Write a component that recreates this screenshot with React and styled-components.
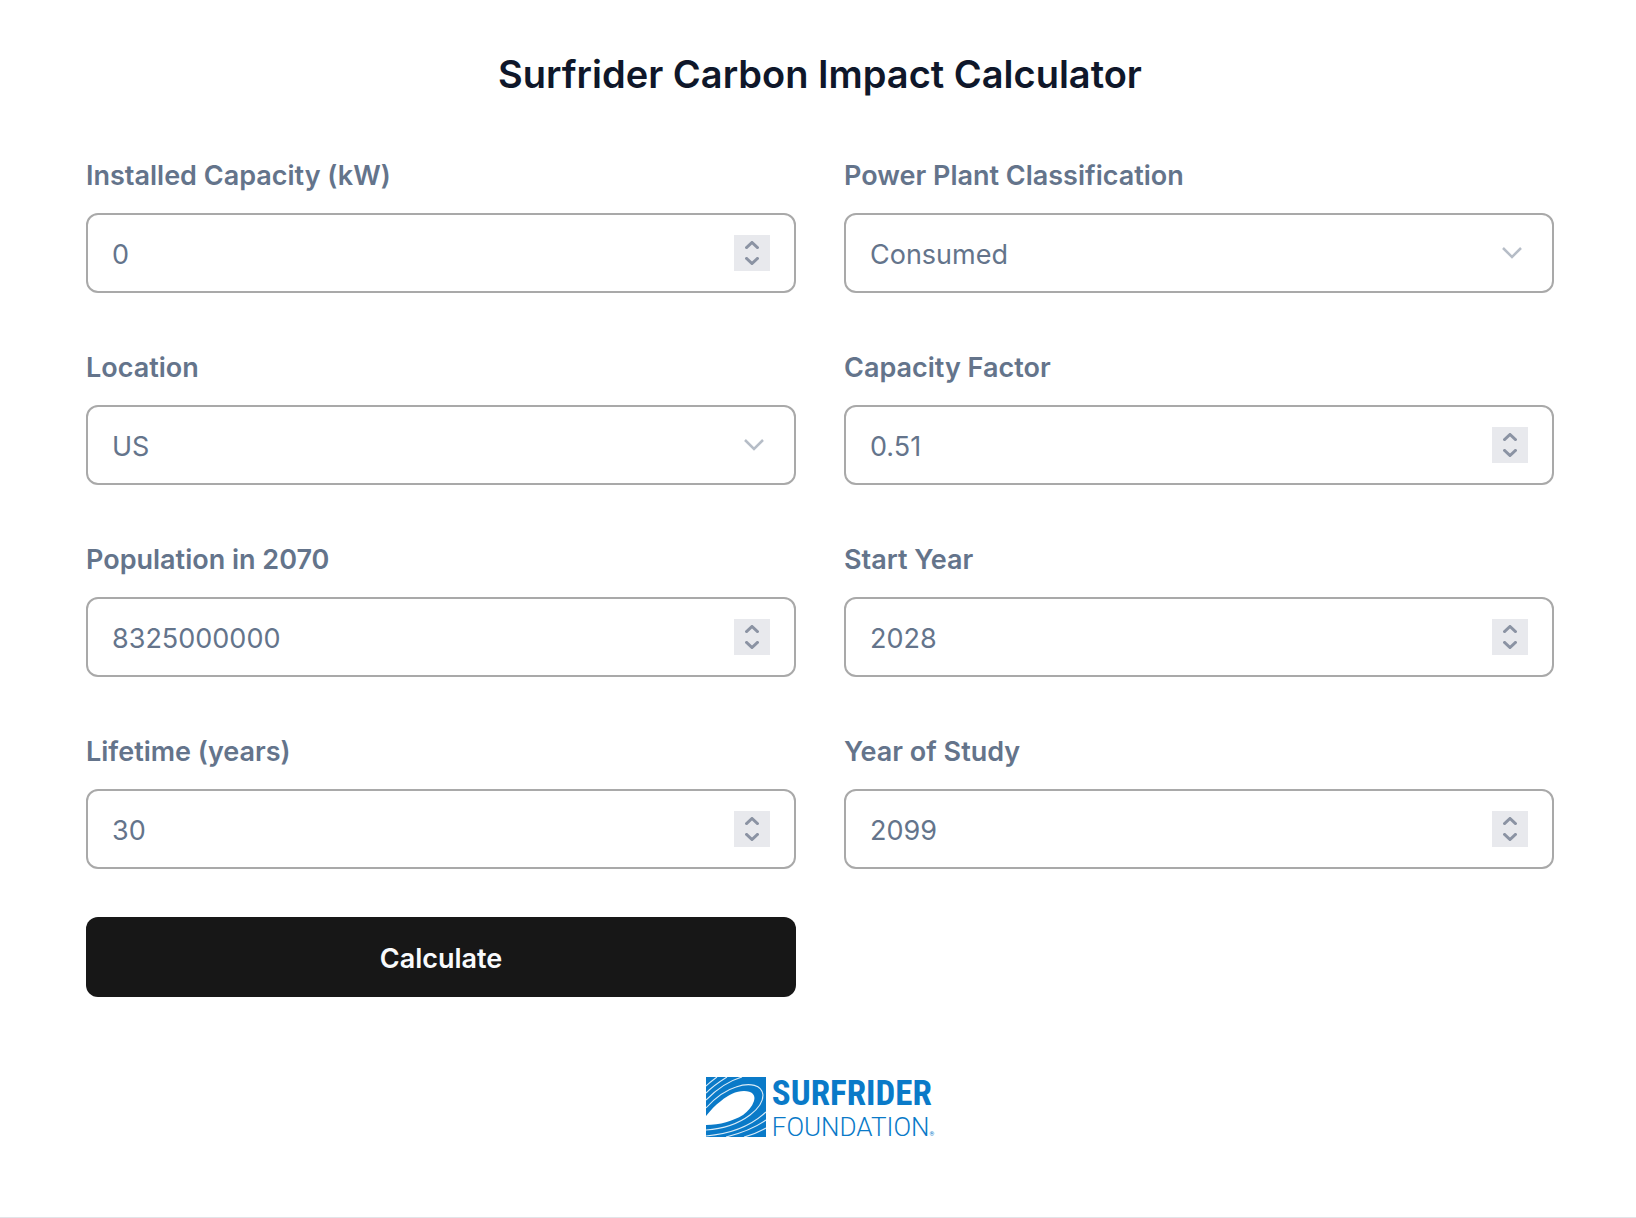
import React, { useState } from "react";
import styled, { createGlobalStyle } from "styled-components";

const GlobalStyle = createGlobalStyle`
  * { box-sizing: border-box; }
  body {
    margin: 0;
    background: #ffffff;
    color: #0f172a;
    font-family: Inter, "Liberation Sans", sans-serif;
  }
`;

const Page = styled.main`
  padding: 54px 82px 80px 86px;
  border-bottom: 1px solid #e2e4e8;
`;

const Title = styled.h1`
  margin: 0 0 55px;
  font-size: 38px;
  line-height: 40px;
  font-weight: 600;
  text-align: center;
`;

const Form = styled.form`
  display: grid;
  grid-template-columns: 1fr 1fr;
  gap: 48px;
`;

const Field = styled.div`
  display: flex;
  flex-direction: column;
  gap: 23px;
  padding-top: 13px;
`;

const Label = styled.label`
  align-self: flex-start;
  font-size: 27px;
  line-height: 28px;
  font-weight: 600;
  color: #64748b;
`;

const Control = styled.div`
  display: flex;
  align-items: center;
  height: 80px;
  padding-right: 24px;
  border: 2px solid #a9a9a9;
  border-radius: 12px;
  background: #ffffff;
`;

const NumberInput = styled.input`
  flex: 1;
  min-width: 0;
  height: 100%;
  padding: 2px 24px 0;
  border: 0;
  outline: none;
  background: transparent;
  color: #64748b;
  font: inherit;
  font-size: 27px;
  appearance: textfield;

  &::-webkit-inner-spin-button {
    display: none;
  }
`;

const Stepper = styled.div`
  display: flex;
  flex-direction: column;
  width: 36px;
  height: 36px;
  background: #e8e9ed;
`;

const StepButton = styled.button`
  display: flex;
  flex: 1;
  align-items: ${(p) => (p.$up ? "flex-end" : "flex-start")};
  justify-content: center;
  padding: ${(p) => (p.$up ? "0 0 4px" : "4px 0 0")};
  border: 0;
  background: none;
  color: #8b93a3;
`;

const SelectControl = styled(Control)`
  display: grid;
  padding-right: 0;

  & > * {
    grid-area: 1 / 1;
  }

  & > svg {
    justify-self: end;
    margin-right: 30px;
    color: #b6bdc7;
    pointer-events: none;
  }
`;

const Select = styled.select`
  width: 100%;
  height: 76px;
  padding: 2px 24px 0;
  border: 0;
  outline: none;
  appearance: none;
  background: transparent;
  color: #64748b;
  font: inherit;
  font-size: 27px;
`;

const SubmitButton = styled.button`
  height: 80px;
  padding: 2px 24px 0;
  border: 0;
  border-radius: 12px;
  background: #171717;
  color: #f8fafc;
  font: inherit;
  font-size: 27px;
  font-weight: 600;
`;

const Footer = styled.footer`
  display: flex;
  justify-content: center;
  padding-top: 80px;
`;

const Brand = styled.a`
  display: flex;
  gap: 6px;
  height: 60px;
  color: #0a7ac8;
  text-decoration: none;
`;

const BrandText = styled.span`
  display: flex;
  flex-direction: column;
  justify-content: space-between;
`;

const BrandName = styled.span`
  font-family: "Roboto Condensed", "Liberation Sans Narrow", "DejaVu Sans Condensed", sans-serif;
  font-size: 35px;
  line-height: 34px;
  font-weight: 700;
`;

const BrandSub = styled.span`
  font-family: Roboto, sans-serif;
  font-size: 26px;
  line-height: 18px;
  font-weight: 300;
`;

const Registered = styled.small`
  font-size: 6px;
  line-height: 6px;
  font-weight: 400;
`;

function StepIcon({ up }) {
  return (
    <svg width="14" height="8" viewBox="0 0 14 8" fill="none" stroke="currentColor" strokeWidth="3" aria-hidden="true">
      <path d={up ? "M0.5 7.5 7 1.5l6.5 6" : "M0.5 0.5 7 6.5l6.5-6"} />
    </svg>
  );
}

function NumberField({ id, label, initial, step = 1 }) {
  const [value, setValue] = useState(initial);
  const change = (amount) => setValue(String(Number((Number(value) + amount).toFixed(2))));
  return (
    <Field>
      <Label htmlFor={id}>{label}</Label>
      <Control>
        <NumberInput id={id} type="number" step={step} value={value} onChange={(e) => setValue(e.target.value)} />
        <Stepper>
          <StepButton type="button" $up aria-label={`Increase ${label}`} onClick={() => change(step)}>
            <StepIcon up />
          </StepButton>
          <StepButton type="button" aria-label={`Decrease ${label}`} onClick={() => change(-step)}>
            <StepIcon />
          </StepButton>
        </Stepper>
      </Control>
    </Field>
  );
}

function SelectField({ id, label, options }) {
  return (
    <Field>
      <Label htmlFor={id}>{label}</Label>
      <SelectControl>
        <Select id={id}>
          {options.map((option) => (
            <option key={option}>{option}</option>
          ))}
        </Select>
        <svg width="20" height="12" viewBox="0 0 20 12" fill="none" stroke="currentColor" strokeWidth="2.5" aria-hidden="true">
          <path d="M1 1l9 9 9-9" />
        </svg>
      </SelectControl>
    </Field>
  );
}

function WaveMark() {
  return (
    <svg width="60" height="60" viewBox="0 0 60 60" aria-hidden="true">
      <path fill="currentColor" d="M0 0h60v60H0z" />
      <path fill="#fff" d="M0 39C5 33 9 28 15 24C22 18 30 14 38 14C46 14 50 18 48 24C46 30 42 34 37 38C27 44 14 48 0 48z" />
      <g fill="none" stroke="#fff" strokeWidth="1.1" strokeOpacity="0.85">
        <path d="M0 9C3 6 7 3 11 0" />
        <path d="M0 16C6 10 13 5 21 0" />
        <path d="M0 23C10 13 22 4 36 0" />
        <path d="M0 31C9 21 20 13 30 10C44 5 56 8 57 18C57 25 52 32 44 38C32 47 16 52 0 53" />
        <path d="M0 59C24 57 45 49 60 35" />
        <path d="M20 60C36 56 49 51 60 43" />
        <path d="M38 60C46 58 53 55 60 51" />
      </g>
    </svg>
  );
}

export default function App() {
  return (
    <>
      <GlobalStyle />
      <Page>
        <Title>Surfrider Carbon Impact Calculator</Title>
        <Form onSubmit={(e) => e.preventDefault()}>
          <NumberField id="capacity" label="Installed Capacity (kW)" initial="0" />
          <SelectField id="classification" label="Power Plant Classification" options={["Consumed"]} />
          <SelectField id="location" label="Location" options={["US"]} />
          <NumberField id="factor" label="Capacity Factor" initial="0.51" step={0.01} />
          <NumberField id="population" label="Population in 2070" initial="8325000000" />
          <NumberField id="start" label="Start Year" initial="2028" />
          <NumberField id="lifetime" label="Lifetime (years)" initial="30" />
          <NumberField id="study" label="Year of Study" initial="2099" />
          <SubmitButton type="submit">Calculate</SubmitButton>
        </Form>
        <Footer>
          <Brand href="#">
            <WaveMark />
            <BrandText>
              <BrandName>SURFRIDER</BrandName>
              <BrandSub>
                FOUNDATION<Registered>®</Registered>
              </BrandSub>
            </BrandText>
          </Brand>
        </Footer>
      </Page>
    </>
  );
}
